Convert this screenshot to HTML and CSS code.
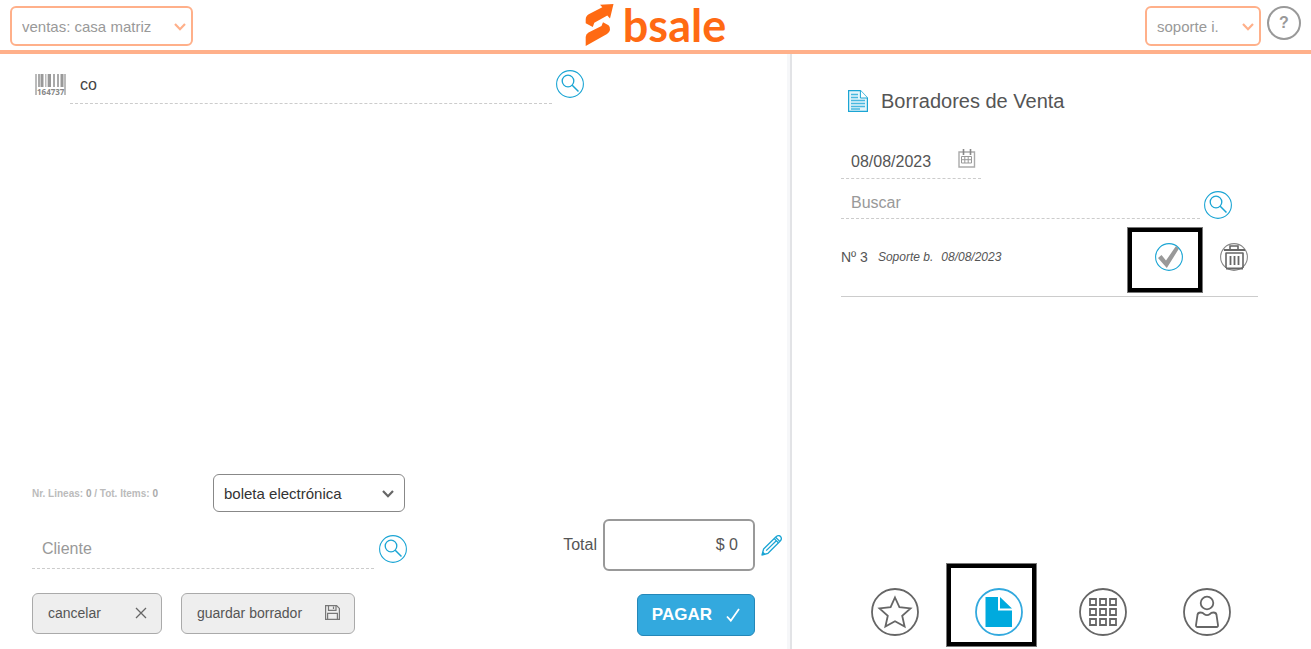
FILE: index.html
```html
<!DOCTYPE html>
<html lang="es">
<head>
    <meta charset="UTF-8">
    <meta name="viewport" content="width=device-width, initial-scale=1.0">
    <title>bsale</title>
    <link rel="stylesheet" href="styles.css">
</head>
<body>
    <svg class="sprite" aria-hidden="true">
        <symbol id="search" viewBox="0 0 28 28">
            <circle cx="14" cy="14" r="13.4" fill="none" stroke="#1ba5d4" stroke-width="1.1"/>
            <circle cx="12" cy="11" r="5.8" fill="none" stroke="#1ba5d4" stroke-width="1.3"/>
            <path d="M16.2 15.2L22.5 21.5" fill="none" stroke="#1ba5d4" stroke-width="1.5"/>
        </symbol>
        <symbol id="chevron" viewBox="0 0 12 8">
            <path d="M1 1l5 5.2L11 1" fill="none" stroke="currentColor" stroke-width="2.2"/>
        </symbol>
    </svg>

    <header class="header">
        <div class="select select-branch">
            <select aria-label="Sucursal"><option>ventas: casa matriz</option></select>
            <svg class="chevron"><use href="#chevron"/></svg>
        </div>
        <a class="logo" href="#">
            <svg width="29" height="43" viewBox="0 0 29 43" aria-hidden="true">
                <path d="M15 .8L28.500 0 25 14.500 22.300 11.500 9.300 18.800 7.800 23 .7 19.300V15.500Q.7 12 3.700 10.300L17.300 3.300Z" fill="#ff6a13"/>
                <path d="M.7 42V33Q.7 30 3.500 28.500L16.500 22 18 18.300 23.500 21.300Q25.500 23 25 26 24.300 28.700 22 30Z" fill="#ff6a13"/>
            </svg>
            <span>bsale</span>
        </a>
        <div class="user">
            <div class="select select-user">
                <select aria-label="Usuario"><option>soporte i.</option></select>
                <svg class="chevron"><use href="#chevron"/></svg>
            </div>
            <button class="help" type="button">?</button>
        </div>
    </header>

    <main class="main">
        <section class="sale">
            <div class="product-search">
                <svg class="barcode" width="31" height="23" viewBox="0 0 31 23" aria-hidden="true">
                    <path d="M1 0v21M30 0v21" stroke="#bbb" stroke-width="2"/>
                    <path d="M4 0v13M19 0v13M23 0v13" stroke="#aaa" stroke-width="2"/>
                    <path d="M7 0v13M14.500 0v13M27 0v13" stroke="#999" stroke-width="3"/>
                    <path d="M10.500 0v13M12 0v13" stroke="#bbb" stroke-width="1"/>
                    <text x="2" y="21">164737</text>
                </svg>
                <input class="line-input" type="text" value="co" aria-label="Producto">
                <button class="icon-button" type="button" aria-label="Buscar producto"><svg width="28" height="28"><use href="#search"/></svg></button>
            </div>

            <div class="checkout">
                <div class="document">
                    <div class="document-type">
                        <p class="counter">Nr. Lineas: <b>0</b> / Tot. Items: <b>0</b></p>
                        <div class="select select-document">
                            <select aria-label="Documento"><option>boleta electrónica</option></select>
                            <svg class="chevron"><use href="#chevron"/></svg>
                        </div>
                    </div>
                    <div class="client">
                        <input class="line-input" type="text" placeholder="Cliente" aria-label="Cliente">
                        <button class="icon-button" type="button" aria-label="Buscar cliente"><svg width="28" height="28"><use href="#search"/></svg></button>
                    </div>
                    <div class="actions">
                        <button class="button" type="button">
                            cancelar
                            <svg width="12" height="12" viewBox="0 0 12 12"><path d="M1 1l10 10M11 1L1 11" fill="none" stroke="#666" stroke-width="1.3"/></svg>
                        </button>
                        <button class="button" type="button">
                            guardar borrador
                            <svg width="15" height="15" viewBox="0 0 15 15"><g fill="none" stroke="#777" stroke-width="1.2"><path d="M.6.6h11l2.800 2.800v11H.6z"/><path d="M3.500.6v4.800h7.500V.6M8.500 1.500v2.500M2.600 14.400V8.300h9.800v6.100"/></g></svg>
                        </button>
                    </div>
                </div>
                <div class="payment">
                    <div class="total">
                        <label for="total">Total</label>
                        <input id="total" type="text" value="$ 0">
                        <button class="icon-button" type="button" aria-label="Editar total">
                            <svg width="21" height="21" viewBox="0 0 21 21"><g fill="none" stroke="#1ba5d4" stroke-width="1.3" stroke-linejoin="round"><path d="M1 20l1.600-6L14.800 2Q17.500-.5 19.500 1.500 21.500 3.800 19 6.200L7 18.300z"/><path d="M13.200 3.600l4.200 4.200M14.600 2.200l4.200 4.200M5.200 15.600L15.300 5.700"/></g><path d="M1 20l.9-3.500 2.600 2.600z" fill="#1ba5d4"/></svg>
                        </button>
                    </div>
                    <button class="pay" type="button">
                        PAGAR
                        <svg width="14" height="14" viewBox="0 0 14 14"><path d="M1 8.500l3.800 4.200L13 1" fill="none" stroke="#fff" stroke-width="1.8"/></svg>
                    </button>
                </div>
            </div>
        </section>

        <aside class="drafts">
            <h1 class="drafts-title">
                <svg width="20" height="22" viewBox="0 0 20 22" aria-hidden="true"><path d="M.6.6h11.800l7 7.400v13.400H.6z" fill="#e4f5fb" stroke="#1ba5d4" stroke-width="1.2"/><path d="M12.400.6V8h7" fill="#fff" stroke="#1ba5d4"/><path d="M3 4.500h7M3 7.500h7M3 10.500h14M3 13.500h14M3 16.500h14M3 19h9" stroke="#48b8df" stroke-width="1.4"/></svg>
                Borradores de Venta
            </h1>
            <div class="date">
                <input type="text" value="08/08/2023" aria-label="Fecha">
                <svg width="18" height="19" viewBox="0 0 18 19" aria-hidden="true"><path d="M1 3h15.500v15H1z" fill="none" stroke="#aaa" stroke-width="1.4"/><path d="M5.500 0v6M12.500 0v6" stroke="#888" stroke-width="1.6"/><path d="M3.500 7.500h10v6.500h-10zM3.500 10.700h10M6.800 7.500v6.500M10.200 7.500v6.500" fill="none" stroke="#999"/></svg>
            </div>
            <div class="draft-search">
                <input class="line-input" type="text" placeholder="Buscar" aria-label="Buscar borrador">
                <button class="icon-button" type="button" aria-label="Buscar"><svg width="28" height="28"><use href="#search"/></svg></button>
            </div>
            <ul class="draft-list">
                <li class="draft">
                    <span class="draft-number">Nº 3</span>
                    <em>Soporte b.</em>
                    <em>08/08/2023</em>
                    <button class="icon-button draft-select marked" type="button" aria-label="Seleccionar">
                        <svg width="28" height="28" viewBox="0 0 28 28"><path d="M3 15L6.500 12 11 17.500 21 3 24 5.500 11.800 25z" fill="#999"/><circle cx="14" cy="14" r="13.4" fill="none" stroke="#1ba5d4" stroke-width="1.1"/></svg>
                    </button>
                    <button class="icon-button" type="button" aria-label="Eliminar">
                        <svg width="28" height="28" viewBox="0 0 28 28"><circle cx="14" cy="14" r="13.4" fill="none" stroke="#888" stroke-width="1.1"/><g fill="none" stroke="#666"><path d="M4 7h21" stroke-width="2"/><path d="M10 6.500V3h8v3.500M6 10h17M6 9.500v15.500M23 9.500v15.500" stroke-width="1.6"/><path d="M10.500 13v9M14.500 13v9M18.500 13v9" stroke-width="1.8"/><path d="M6 25.500h17" stroke-width="2"/></g></svg>
                    </button>
                </li>
            </ul>
            <nav class="tabs">
                <button type="button" aria-label="Favoritos">
                    <svg width="48" height="48" viewBox="0 0 48 48"><g fill="none" stroke="#666" stroke-width="1.8"><circle cx="24" cy="24" r="23"/><path d="M24 9.500l4.400 9.700 11.100 1.200-8.300 7.300 2.400 10.800L24 33.200l-9.600 5.300 2.400-10.800-8.300-7.300 11.100-1.200z"/></g></svg>
                </button>
                <button class="marked" type="button" aria-label="Borradores">
                    <svg width="48" height="48" viewBox="0 0 48 48"><circle cx="24" cy="24" r="23" fill="none" stroke="#33a9de" stroke-width="1.8"/><path d="M10.500 9h12.500v13.500h14V39H10.500zM25 9l12 11.500H25z" fill="#00aade"/></svg>
                </button>
                <button type="button" aria-label="Productos">
                    <svg width="48" height="48" viewBox="0 0 48 48"><g fill="none" stroke="#666" stroke-width="1.8"><circle cx="24" cy="24" r="23"/><path d="M11 11h6v6h-6zM21 11h6v6h-6zM31 11h6v6h-6zM11 21h6v6h-6zM21 21h6v6h-6zM31 21h6v6h-6zM11 31h6v6h-6zM21 31h6v6h-6zM31 31h6v6h-6z"/></g></svg>
                </button>
                <button type="button" aria-label="Clientes">
                    <svg width="48" height="48" viewBox="0 0 48 48"><g fill="none" stroke="#666" stroke-width="1.8"><circle cx="24" cy="24" r="23"/><circle cx="24" cy="15" r="6.3"/><path d="M17.500 24.500Q14.800 24.500 14.500 27L13 37Q12.800 39 14.500 39H33.500Q35.200 39 35 37L33.500 27Q33.200 24.500 30.500 24.500 28 24.500 27 26 24 28.300 21 26 20 24.500 17.500 24.500z"/></g></svg>
                </button>
            </nav>
        </aside>
    </main>
</body>
</html>
```
FILE: styles.css
```css
* {
    box-sizing: border-box;
}
body {
    margin: 0;
    min-height: 100vh;
    display: flex;
    flex-direction: column;
    font-family: "Liberation Sans", Arial, sans-serif;
    font-size: 16px;
    color: #555;
    background-color: #fff;
}
button, input, select {
    font-family: inherit;
    font-size: inherit;
    color: inherit;
}
button {
    cursor: pointer;
}
svg {
    display: block;
    flex-shrink: 0;
}
.sprite {
    position: absolute;
    width: 0;
    height: 0;
}

/* header */
.header {
    display: grid;
    grid-template-columns: 1fr auto 1fr;
    align-items: center;
    height: 54px;
    padding: 2px 10px 0;
    border-bottom: 4px solid #ffb08a;
}
.select {
    position: relative;
    color: #999;
}
.select select {
    width: 100%;
    height: 40px;
    padding: 0 10px;
    border: 2px solid #ffb08a;
    border-radius: 6px;
    background-color: #fff;
    font-size: 15px;
    appearance: none;
}
.chevron {
    position: absolute;
    top: 17px;
    right: 7px;
    width: 12px;
    height: 8px;
    color: #ffb08a;
    pointer-events: none;
}
.select-branch {
    width: 183px;
}
.select-user {
    width: 116px;
}
.logo {
    display: flex;
    align-items: center;
    gap: 9px;
    padding-bottom: 2px;
    color: #ff6a13;
    text-decoration: none;
}
.logo span {
    font-family: Lato, sans-serif;
    font-size: 45px;
    font-weight: bold;
    line-height: 46px;
}
.user {
    display: flex;
    justify-content: flex-end;
    gap: 6px;
}
.help {
    width: 34px;
    height: 34px;
    padding: 0;
    border: 2px solid #999;
    border-radius: 50%;
    background: none;
    color: #999;
    font-weight: bold;
}

/* columns */
.main {
    flex: 1;
    display: grid;
    grid-template-columns: 792fr 519fr;
}
.sale {
    display: flex;
    flex-direction: column;
    justify-content: space-between;
    padding: 12px 8px 13px 32px;
    border-right: 2px solid #e2e3e6;
    box-shadow: inset -3px 0 #f6f7f9;
}
.line-input {
    flex: 1;
    min-width: 0;
    height: 40px;
    padding: 0 10px;
    border: none;
    border-bottom: 1px dashed #ccc;
    background: none;
}
.line-input::placeholder {
    color: #999;
}
.icon-button {
    display: block;
    padding: 0;
    border: none;
    background: none;
}

/* sale */
.product-search {
    display: flex;
    align-items: center;
    margin-right: 198px;
    padding-left: 3px;
}
.product-search .line-input {
    height: 38px;
    margin: 0 4px;
    color: #444;
}
.product-search .icon-button {
    margin-bottom: 2px;
}
.barcode text {
    font-family: "Open Sans", sans-serif;
    font-size: 8px;
    font-weight: bold;
    fill: #888;
}
.checkout {
    display: flex;
    justify-content: space-between;
    align-items: flex-end;
}
.document {
    width: 375px;
}
.document-type {
    display: flex;
    justify-content: space-between;
    align-items: center;
    margin-bottom: 17px;
    padding-right: 2px;
}
.counter {
    margin: 0;
    font-size: 10px;
    font-weight: bold;
    color: #bbb;
}
.counter b {
    color: #aaa;
}
.select-document {
    width: 192px;
    color: #333;
}
.select-document select {
    height: 38px;
    border: 1px solid #888;
}
.select-document .chevron {
    right: 11px;
    top: 16px;
    color: #666;
}
.client {
    display: flex;
    align-items: center;
    gap: 5px;
}
.actions {
    display: flex;
    gap: 19px;
    margin-top: 24px;
    margin-bottom: 2px;
}
.button {
    display: flex;
    justify-content: space-between;
    align-items: center;
    gap: 23px;
    min-width: 130px;
    height: 41px;
    padding: 0 14px 2px 15px;
    border: 1px solid #aaa;
    border-radius: 6px;
    background-color: #eee;
    font-size: 14px;
}
.payment {
    display: flex;
    flex-direction: column;
    gap: 23px;
    align-items: flex-end;
}
.total {
    display: flex;
    align-items: center;
    gap: 6px;
}
.total input {
    width: 152px;
    height: 52px;
    padding: 0 15px;
    border: 2px solid #999;
    border-radius: 6px;
    text-align: right;
}
.pay {
    display: flex;
    align-items: center;
    gap: 14px;
    height: 42px;
    margin-right: 27px;
    padding: 0 14px;
    border: 1px solid #2487b8;
    border-radius: 6px;
    background-color: #33a9de;
    color: #fff;
    font-size: 17px;
    font-weight: bold;
}

/* drafts */
.drafts {
    display: flex;
    flex-direction: column;
    padding: 33px 53px 13px 49px;
}
.drafts-title {
    display: flex;
    align-items: center;
    gap: 13px;
    margin: 0 0 28px;
    padding-left: 7px;
    font-size: 20px;
    font-weight: normal;
    line-height: 28px;
}
.date {
    display: flex;
    width: 140px;
    height: 36px;
    padding: 6px 5px 0 10px;
    border-bottom: 1px dashed #ccc;
}
.date input {
    flex: 1;
    min-width: 0;
    height: 26px;
    padding: 0;
    border: none;
    background: none;
}
.draft-search {
    display: flex;
    align-items: flex-end;
    gap: 4px;
    margin-right: 26px;
    padding-top: 8px;
}
.draft-search .line-input {
    height: 32px;
}
.draft-list {
    margin: 0;
    padding: 0;
    list-style: none;
}
.draft {
    display: flex;
    align-items: center;
    gap: 8px;
    height: 78px;
    padding: 0 10px 2px 0;
    border-bottom: 1px solid #ccc;
    font-size: 12px;
}
.draft-number {
    margin-right: 2px;
    font-size: 14px;
}
.draft-select {
    margin-left: auto;
    margin-right: 29px;
}
.tabs {
    display: flex;
    justify-content: center;
    gap: 56px;
    margin-top: auto;
    padding-left: 2px;
}
.tabs button {
    padding: 0;
    border: none;
    border-radius: 50%;
    background: none;
}
/* thick black frame over the highlighted buttons */
.marked {
    position: relative;
}
.marked::after {
    content: "";
    position: absolute;
    top: -16px;
    right: -20px;
    bottom: -22px;
    left: -28px;
    border: 5px solid #000;
    outline: 1px solid #777;
    outline-offset: -1px;
    pointer-events: none;
}
.tabs .marked::after {
    top: -25px;
    right: -14px;
    bottom: -11px;
    left: -29px;
}
```
